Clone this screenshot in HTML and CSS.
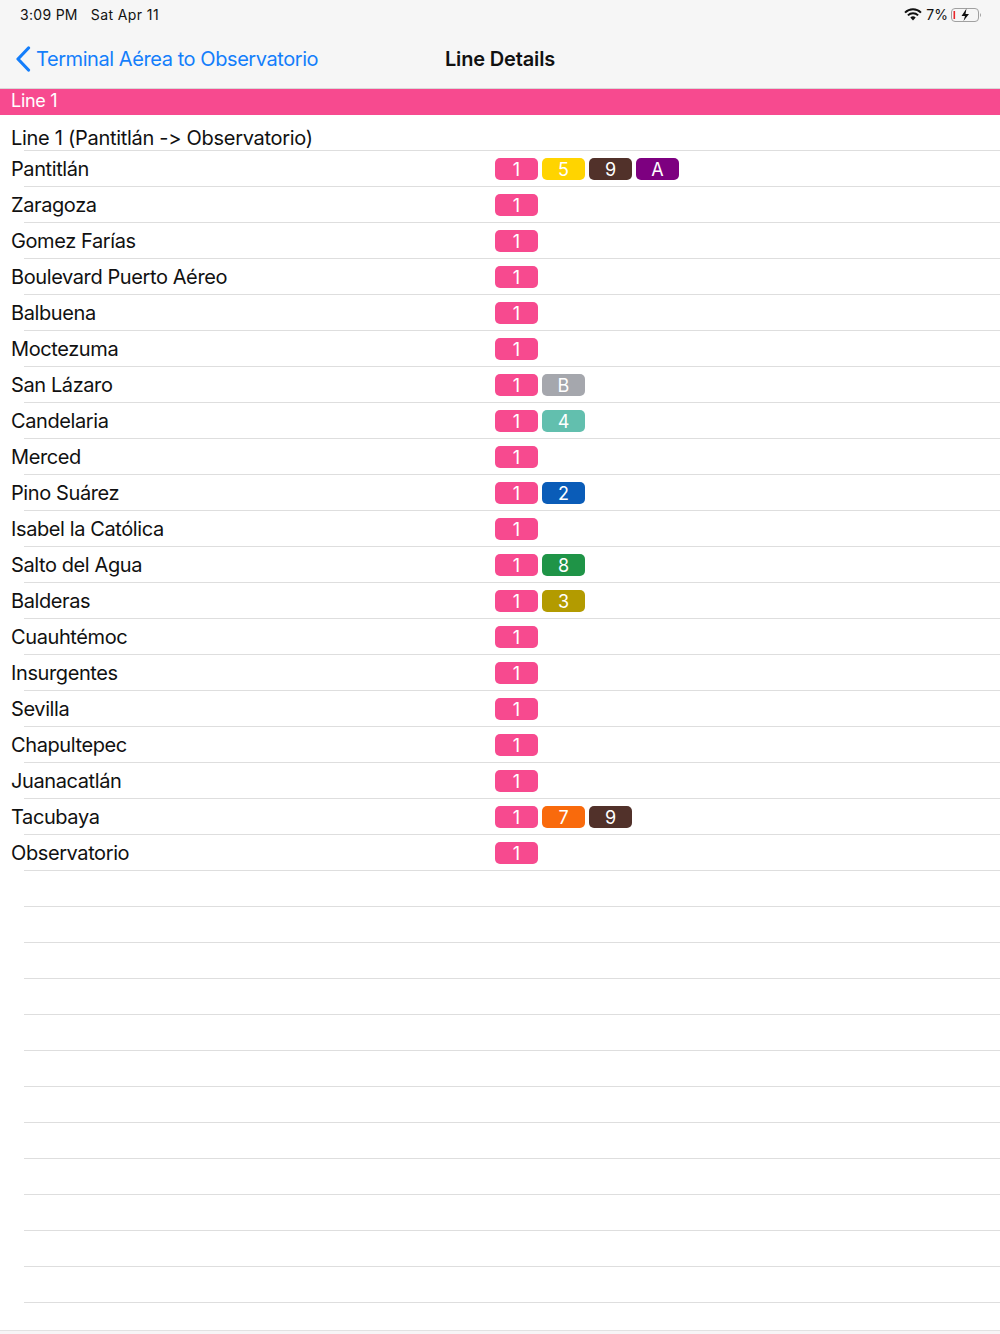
FILE: index.html
```html
<!DOCTYPE html>
<html>
    <head>
        <meta charset="utf-8">
        <title>Line Details</title>
        <link rel="stylesheet" href="styles.css">
    </head>
    <body>
        <div class="status-bar">
            <div class="status-time">3:09 PM<span class="status-date">Sat Apr 11</span></div>
            <div class="status-right">
                <svg class="wifi" width="18" height="13" viewBox="0 0 18 13">
                    <path d="M1 4.6 A11.5 11.5 0 0 1 17 4.6" fill="none" stroke="#111" stroke-width="2"/>
                    <path d="M3.9 7.4 A7.4 7.4 0 0 1 14.1 7.4" fill="none" stroke="#111" stroke-width="2"/>
                    <path d="M6.3 9.6 A3.9 3.9 0 0 1 11.7 9.6 L9 12.6 Z" fill="#111"/>
                </svg>
                <span class="battery-pct">7%</span>
                <svg class="battery" width="31" height="14" viewBox="0 0 31 14">
                    <rect x="0.5" y="0.5" width="27" height="13" rx="3.5" fill="none" stroke="#a0a0a0"/>
                    <rect x="2.5" y="3" width="1.6" height="8" fill="#e8262a"/>
                    <path d="M15.5 0.5 L10.5 8 H14 L12.5 13 L18 6 H14.5 Z" fill="#111"/>
                    <path d="M29 5 A2.5 2.5 0 0 1 29 9 Z" fill="#a0a0a0"/>
                </svg>
            </div>
        </div>
        <div class="nav-bar">
            <a class="back">
                <svg width="16" height="26" viewBox="0 0 16 26">
                    <path d="M13.5 2 L3 13 L13.5 24" fill="none" stroke="#147efb" stroke-width="3.2" stroke-linecap="round" stroke-linejoin="round"/>
                </svg>
                Terminal Aérea to Observatorio
            </a>
            <div class="nav-title">Line Details</div>
        </div>
        <div class="section-header">Line 1</div>
        <div class="table">
            <div class="row row-first">Line 1 (Pantitlán -&gt; Observatorio)</div>
            <div class="row"><span class="name">Pantitlán</span><span class="badges"><b class="l1">1</b><b class="l5">5</b><b class="l9">9</b><b class="la">A</b></span></div>
            <div class="row"><span class="name">Zaragoza</span><span class="badges"><b class="l1">1</b></span></div>
            <div class="row"><span class="name">Gomez Farías</span><span class="badges"><b class="l1">1</b></span></div>
            <div class="row"><span class="name">Boulevard Puerto Aéreo</span><span class="badges"><b class="l1">1</b></span></div>
            <div class="row"><span class="name">Balbuena</span><span class="badges"><b class="l1">1</b></span></div>
            <div class="row"><span class="name">Moctezuma</span><span class="badges"><b class="l1">1</b></span></div>
            <div class="row"><span class="name">San Lázaro</span><span class="badges"><b class="l1">1</b><b class="lb">B</b></span></div>
            <div class="row"><span class="name">Candelaria</span><span class="badges"><b class="l1">1</b><b class="l4">4</b></span></div>
            <div class="row"><span class="name">Merced</span><span class="badges"><b class="l1">1</b></span></div>
            <div class="row"><span class="name">Pino Suárez</span><span class="badges"><b class="l1">1</b><b class="l2">2</b></span></div>
            <div class="row"><span class="name">Isabel la Católica</span><span class="badges"><b class="l1">1</b></span></div>
            <div class="row"><span class="name">Salto del Agua</span><span class="badges"><b class="l1">1</b><b class="l8">8</b></span></div>
            <div class="row"><span class="name">Balderas</span><span class="badges"><b class="l1">1</b><b class="l3">3</b></span></div>
            <div class="row"><span class="name">Cuauhtémoc</span><span class="badges"><b class="l1">1</b></span></div>
            <div class="row"><span class="name">Insurgentes</span><span class="badges"><b class="l1">1</b></span></div>
            <div class="row"><span class="name">Sevilla</span><span class="badges"><b class="l1">1</b></span></div>
            <div class="row"><span class="name">Chapultepec</span><span class="badges"><b class="l1">1</b></span></div>
            <div class="row"><span class="name">Juanacatlán</span><span class="badges"><b class="l1">1</b></span></div>
            <div class="row"><span class="name">Tacubaya</span><span class="badges"><b class="l1">1</b><b class="l7">7</b><b class="l9">9</b></span></div>
            <div class="row"><span class="name">Observatorio</span><span class="badges"><b class="l1">1</b></span></div>
            <div class="row"></div>
            <div class="row"></div>
            <div class="row"></div>
            <div class="row"></div>
            <div class="row"></div>
            <div class="row"></div>
            <div class="row"></div>
            <div class="row"></div>
            <div class="row"></div>
            <div class="row"></div>
            <div class="row"></div>
            <div class="row"></div>
        </div>
        <div class="bottom-edge"></div>
    </body>
</html>
```

FILE: styles.css
```css
html, body {
    margin: 0;
    padding: 0;
    height: 1334px;
    overflow: hidden;
}

body {
    background: #ffffff;
    color: #111111;
    font-family: Inter, Roboto, sans-serif;
    font-variant-ligatures: none;
    font-feature-settings: "calt" 0;
}

.status-bar {
    display: flex;
    justify-content: space-between;
    align-items: center;
    height: 29px;
    padding: 0 18px 0 20px;
    background: #f6f6f6;
    font-size: 14px;
}

.status-time {
    letter-spacing: 0.3px;
}

.status-date {
    margin-left: 13px;
    letter-spacing: 0.4px;
}

.status-right {
    display: flex;
    align-items: center;
    gap: 3px;
}

.wifi {
    margin-right: 1px;
}

.nav-bar {
    display: flex;
    align-items: center;
    justify-content: center;
    position: relative;
    height: 59px;
    background: #f6f6f6;
    border-bottom: 1px solid #d8d8d8;
    box-sizing: content-box;
}

.back {
    position: absolute;
    left: 15px;
    top: 0;
    height: 59px;
    display: flex;
    align-items: center;
    gap: 5px;
    color: #147efb;
    font-size: 20px;
    letter-spacing: -0.43px;
}

.nav-title {
    font-size: 20px;
    font-weight: 600;
    letter-spacing: -0.15px;
}

.section-header {
    height: 26px;
    line-height: 23px;
    padding-left: 11px;
    background: #f74a8f;
    color: #ffffff;
    font-size: 18px;
    letter-spacing: -0.3px;
}

.row {
    display: flex;
    align-items: center;
    height: 36px;
    box-sizing: border-box;
    padding-left: 11px;
    font-size: 20px;
    letter-spacing: -0.4px;
    position: relative;
}

.row::after {
    content: "";
    position: absolute;
    left: 24px;
    right: 0;
    bottom: 0;
    height: 1px;
    background: #dedede;
}

.row-first {
    padding-top: 10px;
    letter-spacing: -0.29px;
}

.name {
    width: 484px;
}

.badges {
    display: flex;
    gap: 4px;
}

.badges b {
    width: 43px;
    height: 22px;
    border-radius: 5px;
    color: #ffffff;
    font-size: 18px;
    font-weight: 400;
    line-height: 24px;
    letter-spacing: 0;
    text-align: center;
}

.l1 { background: #f74a8f; }
.l2 { background: #0a5cb8; }
.l3 { background: #b39b00; }
.l4 { background: #62bfae; }
.l5 { background: #ffd400; }
.l7 { background: #f96a0c; }
.l8 { background: #1f9447; }
.l9 { background: #51312a; }
.la { background: #7d0080; }
.lb { background: #a5a7ad; }

.bottom-edge {
    position: absolute;
    left: 0;
    right: 0;
    top: 1330px;
    height: 4px;
    background: #f7f5f6;
    border-top: 1px solid #e2e2e2;
    box-sizing: border-box;
}
```
